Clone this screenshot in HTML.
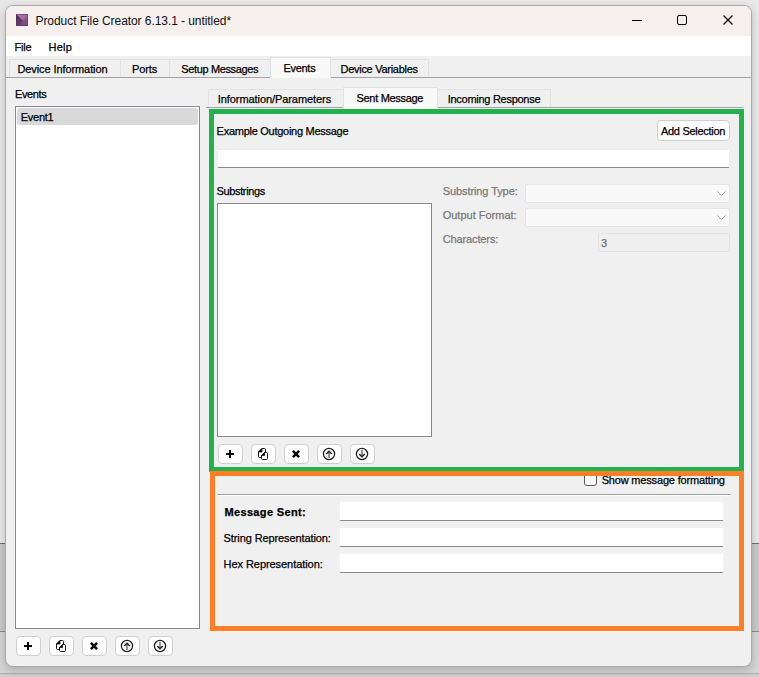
<!DOCTYPE html><html><head><meta charset="utf-8"><style>html,body{margin:0;padding:0;width:759px;height:677px;overflow:hidden;background:#dedede}.b{position:absolute;display:block}.t{position:absolute;white-space:nowrap;font-family:"Liberation Sans",sans-serif;-webkit-text-stroke:0.25px currentColor}</style></head><body><div class="b" style="left:0px;top:0px;width:759px;height:543px;background:#e8e8e8"></div>
<div class="b" style="left:0px;top:543px;width:759px;height:1px;background:#6f6f6f"></div>
<div class="b" style="left:0px;top:544px;width:759px;height:87px;background:#c9c9c9"></div>
<div class="b" style="left:0px;top:631px;width:759px;height:1px;background:#8a8a8a"></div>
<div class="b" style="left:0px;top:632px;width:759px;height:41px;background:#d6d6d6"></div>
<div class="b" style="left:0px;top:673px;width:759px;height:1px;background:#a9a9a9"></div>
<div class="b" style="left:0px;top:674px;width:759px;height:3px;background:#cdcdcd"></div>
<div class="b" style="left:5px;top:5px;width:747px;height:662px;border-radius:8px;box-shadow:0 3px 9px rgba(0,0,0,0.2);background:#f0f0f0;border:1px solid #a9a9a9;box-sizing:border-box;overflow:hidden"></div>
<div class="b" style="left:6px;top:6px;width:745px;height:30px;background:#f5f0ee;border-radius:7px 7px 0 0"></div>
<div class="b" style="left:6px;top:36px;width:745px;height:20px;background:#ffffff"></div>
<svg class="b" style="left:16px;top:14px" width="12" height="12" viewBox="0 0 12 12"><defs><linearGradient id="ga" x1="1" y1="0" x2="0" y2="1"><stop offset="0" stop-color="#93609a"/><stop offset="1" stop-color="#633c6a"/></linearGradient><linearGradient id="gb" x1="0" y1="0" x2="1" y2="0.3"><stop offset="0" stop-color="#b27cb4"/><stop offset="1" stop-color="#96629a"/></linearGradient><linearGradient id="gc" x1="0" y1="0" x2="0.3" y2="1"><stop offset="0" stop-color="#4e2a52"/><stop offset="1" stop-color="#66406c"/></linearGradient></defs><rect width="12" height="12" fill="url(#ga)"/><path d="M0 0 H12 V3 L6.5 6.5 Z" fill="url(#gb)"/><path d="M0 0 L6.5 6.5 L3 12 H0 Z" fill="url(#gc)"/><rect x="0.5" y="0.5" width="11" height="11" fill="none" stroke="#5a2c5c" stroke-width="1" opacity="0.5"/></svg>
<div class="b" style="left:632px;top:20px;width:10px;height:1px;background:#000"></div>
<div class="b" style="left:677px;top:15px;width:10px;height:10px;border:1px solid #000;border-radius:2px;box-sizing:border-box"></div>
<svg class="b" style="left:723px;top:15px" width="10" height="10" viewBox="0 0 10 10"><path d="M0.5 0.5 L9.5 9.5 M9.5 0.5 L0.5 9.5" stroke="#000" stroke-width="1.1"/></svg>
<div class="b" style="left:6px;top:77px;width:745px;height:1px;background:#a3a3a3"></div>
<div class="b" style="left:9px;top:59px;width:112px;height:18px;background:#f0f0f0;border:1px solid #e2e2e2;border-bottom:none;box-sizing:border-box"></div>
<div class="b" style="left:120px;top:59px;width:50px;height:18px;background:#f0f0f0;border:1px solid #e2e2e2;border-bottom:none;box-sizing:border-box"></div>
<div class="b" style="left:169px;top:59px;width:102px;height:18px;background:#f0f0f0;border:1px solid #e2e2e2;border-bottom:none;box-sizing:border-box"></div>
<div class="b" style="left:330px;top:59px;width:99px;height:18px;background:#f0f0f0;border:1px solid #e2e2e2;border-bottom:none;box-sizing:border-box"></div>
<div class="b" style="left:270px;top:57px;width:61px;height:21px;background:#f9f9f9;border:1px solid #e2e2e2;border-bottom:none;box-sizing:border-box"></div>
<div class="b" style="left:15px;top:106px;width:185px;height:523px;background:#fff;border:1px solid #868a91;box-sizing:border-box"></div>
<div class="b" style="left:17px;top:108px;width:181px;height:17px;background:#d9d9d9;border-radius:3px"></div>
<div class="b" style="left:206px;top:107px;width:537px;height:1px;background:#a3a3a3"></div>
<div class="b" style="left:208px;top:89px;width:136px;height:18px;background:#f0f0f0;border:1px solid #e2e2e2;border-bottom:none;box-sizing:border-box"></div>
<div class="b" style="left:437px;top:89px;width:114px;height:18px;background:#f0f0f0;border:1px solid #e2e2e2;border-bottom:none;box-sizing:border-box"></div>
<div class="b" style="left:343px;top:87px;width:95px;height:21px;background:#f9f9f9;border:1px solid #e2e2e2;border-bottom:none;box-sizing:border-box"></div>
<div class="b" style="left:217px;top:149px;width:513px;height:19px;background:#fff;border:1px solid #ececec;border-bottom:1px solid #8a8a8a;box-sizing:border-box;border-radius:2px"></div>
<div class="b" style="left:657px;top:120px;width:73px;height:21px;background:#fdfdfd;border:1px solid #d0d0d0;border-radius:4px;box-sizing:border-box"></div>
<div class="b" style="left:217px;top:203px;width:215px;height:234px;background:#fff;border:1px solid #868a91;box-sizing:border-box"></div>
<div class="b" style="left:525px;top:184px;width:205px;height:19px;background:#f9f9f9;border:1px solid #e6e6e6;box-sizing:border-box;border-radius:2px"></div><svg class="b" style="left:717px;top:191px" width="9" height="5" viewBox="0 0 9 5"><path d="M0.5 0.5 L4.5 4.5 L8.5 0.5" fill="none" stroke="#a5a5a5" stroke-width="1"/></svg>
<div class="b" style="left:525px;top:208px;width:205px;height:19px;background:#f9f9f9;border:1px solid #e6e6e6;box-sizing:border-box;border-radius:2px"></div><svg class="b" style="left:717px;top:215px" width="9" height="5" viewBox="0 0 9 5"><path d="M0.5 0.5 L4.5 4.5 L8.5 0.5" fill="none" stroke="#a5a5a5" stroke-width="1"/></svg>
<div class="b" style="left:598px;top:233px;width:132px;height:19px;background:#efefef;border:1px solid #e3e3e3;box-sizing:border-box;border-radius:2px"></div>
<div class="b" style="left:218px;top:444px;width:25px;height:20px;background:#fdfdfd;border:1px solid #d0d0d0;border-radius:4px;box-sizing:border-box"></div>
<svg class="b" style="left:226px;top:450px" width="8" height="8" viewBox="0 0 8 8"><path d="M0 4 H8 M4 0 V8" stroke="#000" stroke-width="2"/></svg>
<div class="b" style="left:251px;top:444px;width:25px;height:20px;background:#fdfdfd;border:1px solid #d0d0d0;border-radius:4px;box-sizing:border-box"></div>
<svg class="b" style="left:251px;top:444px" width="25" height="20" viewBox="0 0 25 20"><path d="M11 4.5 H13.5 Q14.5 4.5 14.5 5.5 V10 M10 13.5 H8.5 Q7.5 13.5 7.5 12.5 V8 L11 4.5" fill="#fff" stroke="#1a1a1a" stroke-width="1"/><path d="M7.5 8 L11 4.5 V8 Z" fill="#000" stroke="#000" stroke-width="0.7" stroke-linejoin="round"/><path d="M13.5 8.5 H15.5 Q16.5 8.5 16.5 9.5 V14.5 Q16.5 15.5 15.5 15.5 H11.5 Q10.5 15.5 10.5 14.5 V11.5 Z" fill="#fff" stroke="#1a1a1a" stroke-width="1"/><path d="M10.5 11.5 L13.5 8.5 V11.5 Z" fill="#000" stroke="#000" stroke-width="0.7" stroke-linejoin="round"/></svg>
<div class="b" style="left:284px;top:444px;width:25px;height:20px;background:#fdfdfd;border:1px solid #d0d0d0;border-radius:4px;box-sizing:border-box"></div>
<svg class="b" style="left:292px;top:450px" width="8" height="8" viewBox="0 0 8 8"><path d="M0.9 0.9 L7.1 7.1 M7.1 0.9 L0.9 7.1" stroke="#000" stroke-width="2.5"/></svg>
<div class="b" style="left:317px;top:444px;width:25px;height:20px;background:#fdfdfd;border:1px solid #d0d0d0;border-radius:4px;box-sizing:border-box"></div>
<svg class="b" style="left:322px;top:447px" width="14" height="14" viewBox="0 0 14 14"><circle cx="7" cy="7" r="5.6" fill="none" stroke="#222" stroke-width="1.3"/><path d="M7 11 V5" stroke="#777" stroke-width="1.6"/><path d="M4.2 7 L7 4.2 L9.8 7" fill="none" stroke="#222" stroke-width="1.5"/></svg>
<div class="b" style="left:350px;top:444px;width:25px;height:20px;background:#fdfdfd;border:1px solid #d0d0d0;border-radius:4px;box-sizing:border-box"></div>
<svg class="b" style="left:355px;top:447px" width="14" height="14" viewBox="0 0 14 14"><circle cx="7" cy="7" r="5.6" fill="none" stroke="#222" stroke-width="1.3"/><path d="M7 3 V9" stroke="#777" stroke-width="1.6"/><path d="M4.2 7 L7 9.8 L9.8 7" fill="none" stroke="#222" stroke-width="1.5"/></svg>
<div class="b" style="left:16px;top:636px;width:25px;height:20px;background:#fdfdfd;border:1px solid #d0d0d0;border-radius:4px;box-sizing:border-box"></div>
<svg class="b" style="left:24px;top:642px" width="8" height="8" viewBox="0 0 8 8"><path d="M0 4 H8 M4 0 V8" stroke="#000" stroke-width="2"/></svg>
<div class="b" style="left:49px;top:636px;width:25px;height:20px;background:#fdfdfd;border:1px solid #d0d0d0;border-radius:4px;box-sizing:border-box"></div>
<svg class="b" style="left:49px;top:636px" width="25" height="20" viewBox="0 0 25 20"><path d="M11 4.5 H13.5 Q14.5 4.5 14.5 5.5 V10 M10 13.5 H8.5 Q7.5 13.5 7.5 12.5 V8 L11 4.5" fill="#fff" stroke="#1a1a1a" stroke-width="1"/><path d="M7.5 8 L11 4.5 V8 Z" fill="#000" stroke="#000" stroke-width="0.7" stroke-linejoin="round"/><path d="M13.5 8.5 H15.5 Q16.5 8.5 16.5 9.5 V14.5 Q16.5 15.5 15.5 15.5 H11.5 Q10.5 15.5 10.5 14.5 V11.5 Z" fill="#fff" stroke="#1a1a1a" stroke-width="1"/><path d="M10.5 11.5 L13.5 8.5 V11.5 Z" fill="#000" stroke="#000" stroke-width="0.7" stroke-linejoin="round"/></svg>
<div class="b" style="left:82px;top:636px;width:25px;height:20px;background:#fdfdfd;border:1px solid #d0d0d0;border-radius:4px;box-sizing:border-box"></div>
<svg class="b" style="left:90px;top:642px" width="8" height="8" viewBox="0 0 8 8"><path d="M0.9 0.9 L7.1 7.1 M7.1 0.9 L0.9 7.1" stroke="#000" stroke-width="2.5"/></svg>
<div class="b" style="left:115px;top:636px;width:25px;height:20px;background:#fdfdfd;border:1px solid #d0d0d0;border-radius:4px;box-sizing:border-box"></div>
<svg class="b" style="left:120px;top:639px" width="14" height="14" viewBox="0 0 14 14"><circle cx="7" cy="7" r="5.6" fill="none" stroke="#222" stroke-width="1.3"/><path d="M7 11 V5" stroke="#777" stroke-width="1.6"/><path d="M4.2 7 L7 4.2 L9.8 7" fill="none" stroke="#222" stroke-width="1.5"/></svg>
<div class="b" style="left:148px;top:636px;width:25px;height:20px;background:#fdfdfd;border:1px solid #d0d0d0;border-radius:4px;box-sizing:border-box"></div>
<svg class="b" style="left:153px;top:639px" width="14" height="14" viewBox="0 0 14 14"><circle cx="7" cy="7" r="5.6" fill="none" stroke="#222" stroke-width="1.3"/><path d="M7 3 V9" stroke="#777" stroke-width="1.6"/><path d="M4.2 7 L7 9.8 L9.8 7" fill="none" stroke="#222" stroke-width="1.5"/></svg>
<div class="b" style="left:584px;top:473px;width:13px;height:13px;background:#fdfdfd;border:1px solid #5a5a5a;border-radius:3px;box-sizing:border-box"></div>
<div class="b" style="left:217px;top:494px;width:514px;height:1px;background:#a0a0a0"></div>
<div class="b" style="left:217px;top:495px;width:514px;height:1px;background:#ffffff"></div>
<div class="b" style="left:339px;top:501px;width:385px;height:20px;background:#fff;border:1px solid #f2f2f2;border-bottom:1px solid #8a8a8a;box-sizing:border-box;border-radius:2px"></div>
<div class="b" style="left:339px;top:527px;width:385px;height:20px;background:#fff;border:1px solid #f2f2f2;border-bottom:1px solid #8a8a8a;box-sizing:border-box;border-radius:2px"></div>
<div class="b" style="left:339px;top:553px;width:385px;height:20px;background:#fff;border:1px solid #f2f2f2;border-bottom:1px solid #8a8a8a;box-sizing:border-box;border-radius:2px"></div>
<div class="b" style="left:209px;top:109px;width:535px;height:363px;border:5px solid #22b14c;box-sizing:border-box"></div>
<div class="b" style="left:210px;top:471px;width:534px;height:160px;border:5px solid #ff7f27;border-top-width:5px;box-sizing:border-box"></div>
<div class="t" style="left:35.50px;top:14px;font-size:12px;line-height:14px;letter-spacing:-0.066px;color:#111;-webkit-text-stroke:0">Product File Creator 6.13.1 - untitled*</div>
<div class="t" style="left:14.60px;top:40.5px;font-size:11px;line-height:13px;letter-spacing:-0.267px;color:#000;">File</div>
<div class="t" style="left:48.40px;top:40.5px;font-size:11px;line-height:13px;letter-spacing:0.300px;color:#000;">Help</div>
<div class="t" style="left:17.40px;top:63px;font-size:11px;line-height:13px;letter-spacing:-0.088px;color:#000;">Device Information</div>
<div class="t" style="left:132.00px;top:63px;font-size:11px;line-height:13px;letter-spacing:-0.125px;color:#000;">Ports</div>
<div class="t" style="left:181.30px;top:63px;font-size:11px;line-height:13px;letter-spacing:-0.362px;color:#000;">Setup Messages</div>
<div class="t" style="left:283.50px;top:62px;font-size:11px;line-height:13px;letter-spacing:-0.300px;color:#000;">Events</div>
<div class="t" style="left:340.50px;top:63px;font-size:11px;line-height:13px;letter-spacing:-0.280px;color:#000;">Device Variables</div>
<div class="t" style="left:14.90px;top:88px;font-size:11px;line-height:13px;letter-spacing:-0.350px;color:#000;">Events</div>
<div class="t" style="left:20.70px;top:111px;font-size:11px;line-height:13px;letter-spacing:-0.240px;color:#000;">Event1</div>
<div class="t" style="left:217.75px;top:93px;font-size:11px;line-height:13px;letter-spacing:-0.074px;color:#000;">Information/Parameters</div>
<div class="t" style="left:356.50px;top:92px;font-size:11px;line-height:13px;letter-spacing:-0.309px;color:#000;">Sent Message</div>
<div class="t" style="left:447.70px;top:93px;font-size:11px;line-height:13px;letter-spacing:-0.275px;color:#000;">Incoming Response</div>
<div class="t" style="left:216.60px;top:125px;font-size:11px;line-height:13px;letter-spacing:-0.270px;color:#000;">Example Outgoing Message</div>
<div class="t" style="left:661.00px;top:125px;font-size:11px;line-height:13px;letter-spacing:-0.292px;color:#000;">Add Selection</div>
<div class="t" style="left:216.50px;top:185px;font-size:11px;line-height:13px;letter-spacing:-0.361px;color:#000;">Substrings</div>
<div class="t" style="left:442.70px;top:185px;font-size:11px;line-height:13px;letter-spacing:-0.086px;color:#7a7a7a;">Substring Type:</div>
<div class="t" style="left:442.70px;top:209px;font-size:11px;line-height:13px;letter-spacing:0.000px;color:#7a7a7a;">Output Format:</div>
<div class="t" style="left:442.70px;top:233px;font-size:11px;line-height:13px;letter-spacing:-0.120px;color:#7a7a7a;">Characters:</div>
<div class="t" style="left:600.90px;top:237px;font-size:11px;line-height:13px;letter-spacing:0.000px;color:#6d6d6d;">3</div>
<div class="t" style="left:601.70px;top:474px;font-size:11px;line-height:13px;letter-spacing:-0.177px;color:#000;">Show message formatting</div>
<div class="t" style="left:224.40px;top:506px;font-size:11px;line-height:13px;letter-spacing:0.362px;font-weight:bold;color:#000;">Message Sent:</div>
<div class="t" style="left:223.60px;top:532px;font-size:11px;line-height:13px;letter-spacing:-0.105px;color:#000;">String Representation:</div>
<div class="t" style="left:223.60px;top:558px;font-size:11px;line-height:13px;letter-spacing:-0.061px;color:#000;">Hex Representation:</div></body></html>
